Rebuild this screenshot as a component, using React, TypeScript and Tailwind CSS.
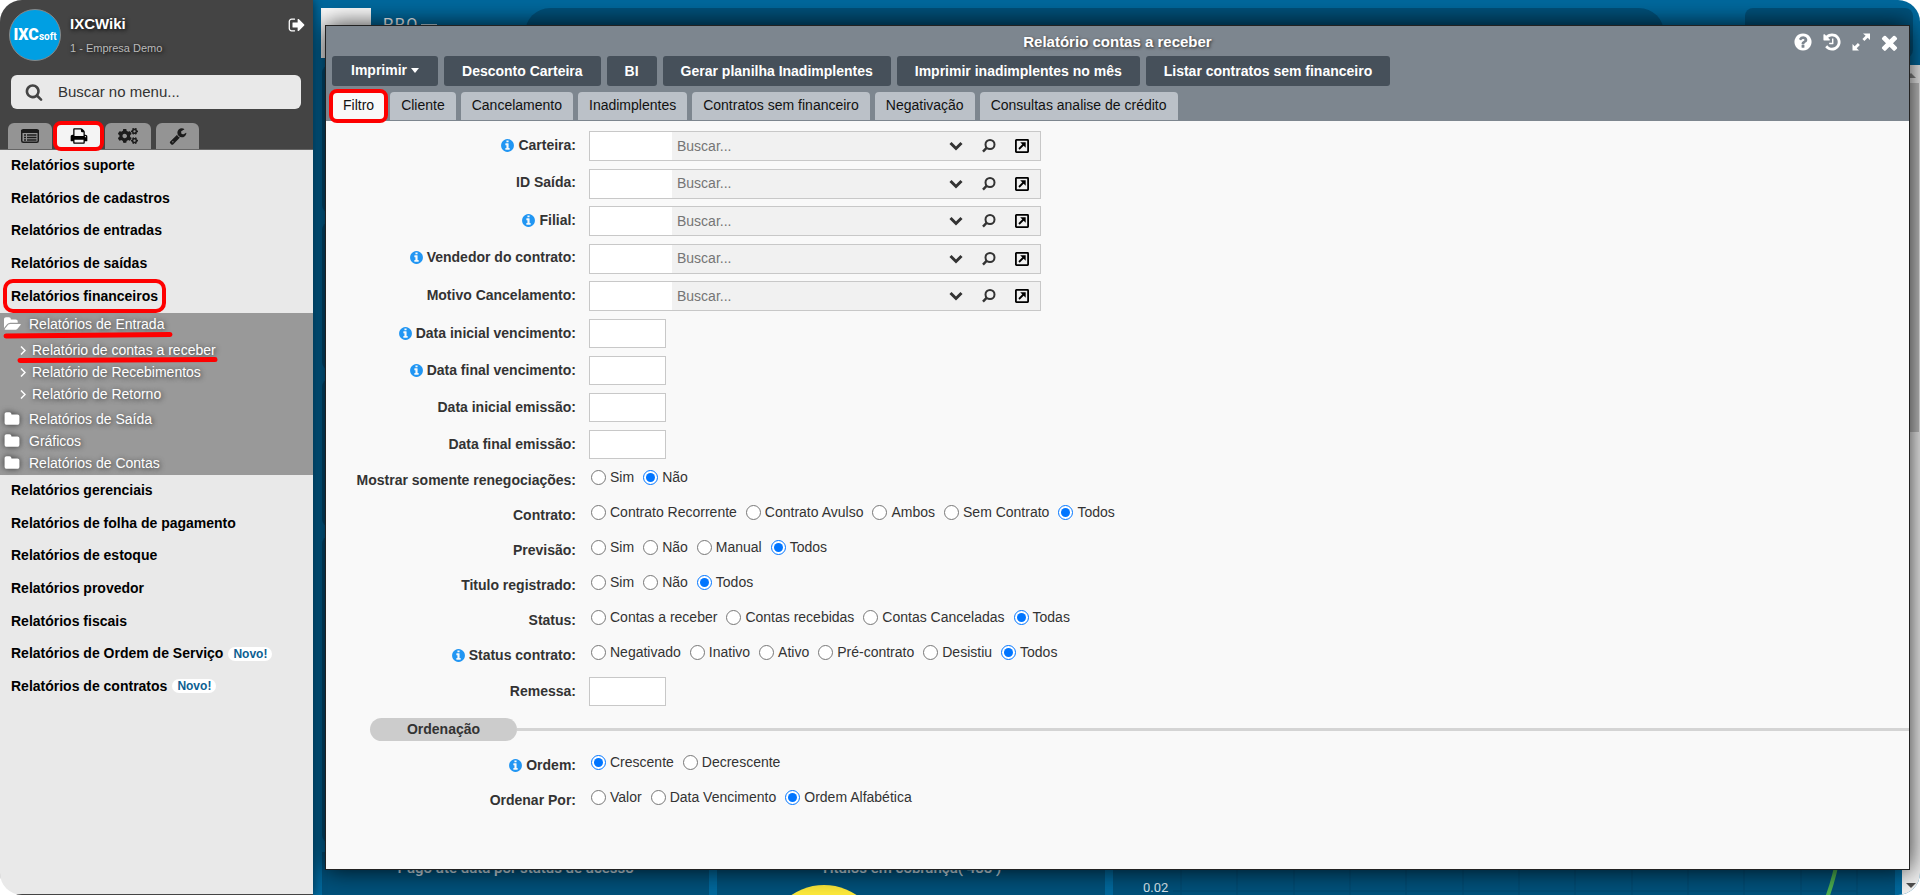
import { useState } from "react";
import { FaCogs } from "react-icons/fa";

// Font Awesome 4 glyphs, 1792 grid
const GLYPHS = {
  signOut:
    "M704 1440q0 4 1 20t.5 26.5-3 23.5-10 19.5-20.5 6.5h-320q-119 0-203.5-84.5t-84.5-203.5v-704q0-119 84.5-203.5t203.5-84.5h320q13 0 22.5 9.5t9.5 22.5q0 4 1 20t.5 26.5-3 23.5-10 19.5-20.5 6.5h-320q-66 0-113 47t-47 113v704q0 66 47 113t113 47h312l11.5 1 11.5 3 8 5.5 7 9 2 13.5zm928-544q0 26-19 45l-544 544q-19 19-45 19t-45-19-19-45v-288h-448q-26 0-45-19t-19-45v-384q0-26 19-45t45-19h448v-288q0-26 19-45t45-19 45 19l544 544q19 19 19 45z",
  print:
    "M448 1536h896v-256h-896v256zm0-640h896v-384h-160q-40 0-68-28t-28-68v-160h-640v640zm1152 64q0-26-19-45t-45-19-45 19-19 45 19 45 45 19 45-19 19-45zm128 0v416q0 13-9.5 22.5t-22.5 9.5h-224v160q0 40-28 68t-68 28h-960q-40 0-68-28t-28-68v-160h-224q-13 0-22.5-9.5t-9.5-22.5v-416q0-79 56.5-135.5t135.5-56.5h64v-544q0-40 28-68t68-28h672q40 0 88 20t76 48l152 152q28 28 48 76t20 88v256h64q79 0 135.5 56.5t56.5 135.5z",
  wrench:
    "M448 1472q0-26-19-45t-45-19-45 19-19 45 19 45 45 19 45-19 19-45zm644-420l-682 682q-37 37-90 37-52 0-91-37l-106-108q-38-36-38-90 0-53 38-91l681-681q39 98 114.5 173.5t173.5 114.5zm634-435q0 39-23 106-47 134-164.5 217.5t-258.5 83.5q-185 0-316.5-131.5t-131.5-316.5 131.5-316.5 316.5-131.5q58 0 121.5 16.5t107.5 46.5q16 11 16 28t-16 28l-293 169v224l193 107q5-3 79-48.5t135.5-81 70.5-35.5q15 0 23.5 10t8.5 25z",
  search:
    "M1216 832q0-185-131.5-316.5t-316.5-131.5-316.5 131.5-131.5 316.5 131.5 316.5 316.5 131.5 316.5-131.5 131.5-316.5zm512 832q0 52-38 90t-90 38q-54 0-90-38l-343-342q-179 124-399 124-143 0-273.5-55.5t-225-150-150-225-55.5-273.5 55.5-273.5 150-225 225-150 273.5-55.5 273.5 55.5 225 150 150 225 55.5 273.5q0 220-124 399l343 343q37 37 37 90z",
  folder:
    "M1728 608v704q0 92-66 158t-158 66h-1216q-92 0-158-66t-66-158v-960q0-92 66-158t158-66h320q92 0 158 66t66 158v32h672q92 0 158 66t66 158z",
  folderOpen:
    "M1879 952q0 31-31 66l-336 396q-43 51-120.5 86.5t-143.5 35.5h-1088q-34 0-60.5-13t-26.5-43q0-31 31-66l336-396q43-51 120.5-86.5t143.5-35.5h1088q34 0 60.5 13t26.5 43zm-343-344v160h-832q-94 0-197 47.5t-164 119.5l-337 396-5 6q0-4-.5-12.5t-.5-12.5v-960q0-92 66-158t158-66h320q92 0 158 66t66 158v32h544q92 0 158 66t66 158z",
  close:
    "M1490 1322q0 40-28 68l-136 136q-28 28-68 28t-68-28l-294-294-294 294q-28 28-68 28t-68-28l-136-136q-28-28-28-68t28-68l294-294-294-294q-28-28-28-68t28-68l136-136q28-28 68-28t68 28l294 294 294-294q28-28 68-28t68 28l136 136q28 28 28 68t-28 68l-294 294 294 294q28 28 28 68z",
  history:
    "M1664 896q0 156-61 298t-164 245-245 164-298 61q-172 0-327-72.5t-264-204.5q-7-10-6.5-22.5t8.5-20.5l137-138q10-9 25-9 16 2 23 12 73 95 179 147t225 52q104 0 198.5-40.5t163.5-109.5 109.5-163.5 40.5-198.5-40.5-198.5-109.5-163.5-163.5-109.5-198.5-40.5q-98 0-188 35.5t-160 101.5l137 138q31 30 14 69-17 40-59 40h-448q-26 0-45-19t-19-45v-448q0-42 40-59 39-17 69 14l130 129q107-101 244.5-156.5t284.5-55.5q156 0 298 61t245 164 164 245 61 298zm-640-288v448q0 14-9 23t-23 9h-320q-14 0-23-9t-9-23v-64q0-14 9-23t23-9h224v-352q0-14 9-23t23-9h64q14 0 23 9t9 23z",
  question:
    "M1024 1376v-192q0-14-9-23t-23-9h-192q-14 0-23 9t-9 23v192q0 14 9 23t23 9h192q14 0 23-9t9-23zm256-672q0-88-55.5-163t-138.5-116-170-41q-243 0-371 213-15 24 8 42l132 100q7 6 19 6 16 0 25-12 53-68 86-92 34-24 86-24 48 0 85.5 26t37.5 59q0 38-20 61t-68 45q-63 28-115.5 86.5t-52.5 125.5v36q0 14 9 23t23 9h192q14 0 23-9t9-23q0-19 21.5-49.5t54.5-49.5q32-18 49-28.5t46-35 44.5-48 28-60.5 12.5-81zm384 192q0 209-103 385.5t-279.5 279.5-385.5 103-385.5-103-279.5-279.5-103-385.5 103-385.5 279.5-279.5 385.5-103 385.5 103 279.5 279.5 103 385.5z",
  info:
    "M1152 1376v-160q0-14-9-23t-23-9h-96v-512q0-14-9-23t-23-9h-320q-14 0-23 9t-9 23v160q0 14 9 23t23 9h96v320h-96q-14 0-23 9t-9 23v160q0 14 9 23t23 9h448q14 0 23-9t9-23zm-128-896v-160q0-14-9-23t-23-9h-192q-14 0-23 9t-9 23v160q0 14 9 23t23 9h192q14 0 23-9t9-23zm640 416q0 209-103 385.5t-279.5 279.5-385.5 103-385.5-103-279.5-279.5-103-385.5 103-385.5 279.5-279.5 385.5-103 385.5 103 279.5 279.5 103 385.5z",
};

function Glyph({ name, size, className = "" }: { name: keyof typeof GLYPHS; size: number; className?: string }) {
  return (
    <svg width={size} height={size} viewBox="0 0 1792 1792" fill="currentColor" className={`shrink-0 overflow-visible ${className}`} aria-hidden="true">
      <path d={GLYPHS[name]} />
    </svg>
  );
}

function ListIcon() {
  return (
    <svg width="18" height="14" viewBox="0 0 18 14" aria-hidden="true">
      <rect x="0.75" y="0.75" width="16.5" height="12.5" rx="1.5" fill="none" stroke="currentColor" strokeWidth="1.5" />
      <path d="M0 1h18v3H0z" fill="currentColor" />
      <path d="M3 6h2M3 8.500h2M3 11h2M6 6h9.500M6 8.500h9.500M6 11h9.500" stroke="currentColor" strokeWidth="1.300" />
    </svg>
  );
}

const menuTop = ["Relatórios suporte", "Relatórios de cadastros", "Relatórios de entradas", "Relatórios de saídas", "Relatórios financeiros"];

const menuBottom = [
  { label: "Relatórios gerenciais" },
  { label: "Relatórios de folha de pagamento" },
  { label: "Relatórios de estoque" },
  { label: "Relatórios provedor" },
  { label: "Relatórios fiscais" },
  { label: "Relatórios de Ordem de Serviço", isNew: true },
  { label: "Relatórios de contratos", isNew: true },
];

const reports = ["Relatório de contas a receber", "Relatório de Recebimentos", "Relatório de Retorno"];
const folders = ["Relatórios de Saída", "Gráficos", "Relatórios de Contas"];

const actions = ["Desconto Carteira", "BI", "Gerar planilha Inadimplentes", "Imprimir inadimplentes no mês", "Listar contratos sem financeiro"];
const tabs = ["Filtro", "Cliente", "Cancelamento", "Inadimplentes", "Contratos sem financeiro", "Negativação", "Consultas analise de crédito"];

const searchFields = [
  { id: "carteira", label: "Carteira:", info: true },
  { id: "id_saida", label: "ID Saída:" },
  { id: "filial", label: "Filial:", info: true },
  { id: "vendedor", label: "Vendedor do contrato:", info: true },
  { id: "motivo", label: "Motivo Cancelamento:" },
];

const dateFields = [
  { id: "venc_ini", label: "Data inicial vencimento:", info: true },
  { id: "venc_fim", label: "Data final vencimento:", info: true },
  { id: "emis_ini", label: "Data inicial emissão:" },
  { id: "emis_fim", label: "Data final emissão:" },
];

type RadioField = { id: string; label: string; info?: boolean; options: string[]; value: string };

const radioFields: RadioField[] = [
  { id: "renegociacoes", label: "Mostrar somente renegociações:", options: ["Sim", "Não"], value: "Não" },
  { id: "contrato", label: "Contrato:", options: ["Contrato Recorrente", "Contrato Avulso", "Ambos", "Sem Contrato", "Todos"], value: "Todos" },
  { id: "previsao", label: "Previsão:", options: ["Sim", "Não", "Manual", "Todos"], value: "Todos" },
  { id: "titulo", label: "Titulo registrado:", options: ["Sim", "Não", "Todos"], value: "Todos" },
  { id: "status", label: "Status:", options: ["Contas a receber", "Contas recebidas", "Contas Canceladas", "Todas"], value: "Todas" },
  { id: "status_contrato", label: "Status contrato:", info: true, options: ["Negativado", "Inativo", "Ativo", "Pré-contrato", "Desistiu", "Todos"], value: "Todos" },
];

const orderFields: RadioField[] = [
  { id: "ordem", label: "Ordem:", info: true, options: ["Crescente", "Decrescente"], value: "Crescente" },
  { id: "ordenar_por", label: "Ordenar Por:", options: ["Valor", "Data Vencimento", "Ordem Alfabética"], value: "Ordem Alfabética" },
];

function Info() {
  return <Glyph name="info" size={15} className="mr-[3px] text-[#2196f3]" />;
}

const labelClass = "flex h-[28px] w-[250px] shrink-0 items-center justify-end font-bold";

function SearchField({ id, label, info }: { id: string; label: string; info?: boolean }) {
  return (
    <div className="flex items-start gap-[13px]">
      <label htmlFor={id} className={labelClass}>
        {info && <Info />}
        {label}
      </label>
      <div className="flex h-[30px] w-[452px] border border-[#c8c8c8] bg-[#f1f1f1] text-[#333]">
        <input id={id} className="w-[82px] bg-white px-1 outline-none" />
        <input aria-label={label} placeholder="Buscar..." className="min-w-0 flex-1 px-[5px] outline-none placeholder:text-[#757575]" />
        <button type="button" aria-label="Abrir lista" className="flex w-[33px] items-center justify-center">
          <svg width="14" height="10" viewBox="0 0 14 10" fill="none" stroke="currentColor" strokeWidth="3">
            <path d="M1.500 2l5.500 5.500L12.500 2" />
          </svg>
        </button>
        <button type="button" aria-label="Pesquisar" className="flex w-[33px] items-center justify-center">
          <svg width="14" height="14" viewBox="0 0 14 14" fill="none" stroke="currentColor" strokeWidth="2">
            <circle cx="8" cy="5.500" r="4.500" />
            <path d="M4.800 8.700L1 12.600" strokeWidth="2.400" />
          </svg>
        </button>
        <button type="button" aria-label="Abrir cadastro" className="mr-[2px] flex w-[33px] items-center justify-center text-black">
          <svg width="14" height="14" viewBox="0 0 14 14" fill="none" stroke="currentColor" strokeWidth="1.800">
            <rect x="0.900" y="0.900" width="12.200" height="12.200" rx="0.500" />
            <path d="M4 10l4.500-4.500" />
            <path d="M5.200 3.300h5.500v5.500z" fill="currentColor" stroke="none" />
          </svg>
        </button>
      </div>
    </div>
  );
}

function TextField({ id, label, info }: { id: string; label: string; info?: boolean }) {
  return (
    <div className="flex items-start gap-[13px]">
      <label htmlFor={id} className={labelClass}>
        {info && <Info />}
        {label}
      </label>
      <input id={id} className="h-[29px] w-[77px] border border-[#c8c8c8] bg-white px-1 outline-none" />
    </div>
  );
}

function RadioRow({ id, label, info, options, value }: RadioField) {
  const [selected, setSelected] = useState(value);
  return (
    <div role="radiogroup" aria-labelledby={`${id}_label`} className="flex h-[35px] gap-[15px]">
      <span id={`${id}_label`} className="flex w-[250px] shrink-0 items-center justify-end pt-[6px] font-bold">
        {info && <Info />}
        {label}
      </span>
      <div className="flex items-center gap-[9px]">
        {options.map((opt) => (
          <label key={opt} className="flex items-center gap-1">
            <input type="radio" name={id} value={opt} checked={selected === opt} onChange={() => setSelected(opt)} className="h-[15px] w-[15px]" />
            {opt}
          </label>
        ))}
      </div>
    </div>
  );
}

function Sidebar() {
  return (
    <aside className="relative z-20 flex w-[313px] shrink-0 flex-col border-b border-[#444] bg-[#e9e9e9] shadow-[0_0_10px_rgba(0,0,0,0.6)]">
      <div className="h-[150px] border-b border-[#666] bg-[#444]">
        <div className="flex pt-[9px] pl-[9px]">
          <div className="flex h-[52px] w-[52px] shrink-0 items-center justify-center rounded-full border border-[#888] bg-[#009fe3]">
            <div className="flex items-baseline font-[Roboto,sans-serif] text-white">
              <span className="text-base font-black">IXC</span>
              <span className="text-[10px] font-bold">soft</span>
            </div>
          </div>
          <div className="ml-[9px] flex-1 text-shadow-[1px_1px_4px_#000]">
            <div className="pt-[5px] text-[15px] leading-5 font-bold text-white">IXCWiki</div>
            <div className="pt-1 text-[11px] leading-5 text-[#bbb]">1 - Empresa Demo</div>
          </div>
          <a href="#sair" aria-label="Sair" className="mt-[7px] mr-[7px] h-[18px] text-white">
            <Glyph name="signOut" size={18} />
          </a>
        </div>
        <label className="mx-[11px] mt-[14px] flex h-[34px] w-[290px] items-center rounded-md bg-[#e9e9e9] pl-[14px] text-[#444]">
          <Glyph name="search" size={18} />
          <input aria-label="Buscar no menu" placeholder="Buscar no menu..." className="ml-[15px] w-[220px] text-[15px] outline-none placeholder:text-[#333]" />
        </label>
        <nav className="mt-[14px] flex h-[26px] gap-[5px] pl-2 text-[#1c1c1c]">
          <button aria-label="Menu" className="flex w-[44px] items-center justify-center rounded-t-md bg-[#949494]">
            <ListIcon />
          </button>
          <button aria-label="Relatórios" className="relative flex w-[43px] items-center justify-center bg-[#f4f4f4] text-black">
            <Glyph name="print" size={18} />
            <span className="absolute -inset-x-1 -top-[2px] -bottom-[2px] rounded-lg border-4 border-[#fe0000]" />
          </button>
          <button aria-label="Configurações" className="flex w-[46px] items-center justify-center rounded-t-md bg-[#949494]">
            <FaCogs size={20} />
          </button>
          <button aria-label="Ferramentas" className="flex w-[43px] items-center justify-center rounded-t-md bg-[#949494]">
            <Glyph name="wrench" size={18} />
          </button>
        </nav>
      </div>

      <ul className="grid h-[163px] grid-rows-5 pl-[11px] font-bold text-black">
        {menuTop.map((item) => (
          <li key={item} className="flex items-center">
            <a href="#menu" className="relative pb-px">
              {item}
              {item === "Relatórios financeiros" && <span className="absolute -inset-x-2 -top-[7px] -bottom-[5px] rounded-[10px] border-4 border-[#fe0000]" />}
            </a>
          </li>
        ))}
      </ul>

      <div className="h-[162px] bg-[#999] leading-[22px] text-white text-shadow-[1px_1px_5px_#333]">
        <a href="#entrada" className="relative flex h-[22px] items-center gap-[9px] pl-1">
          <Glyph name="folderOpen" size={16} />
          Relatórios de Entrada
          <svg className="absolute top-[19px] left-[3px]" width="170" height="7" viewBox="0 0 170 7">
            <path d="M3 4L167 2.500" stroke="#fe0000" strokeWidth="5" strokeLinecap="round" />
          </svg>
        </a>
        <ul className="pt-1 pb-[3px] pl-5">
          {reports.map((r, i) => (
            <li key={r}>
              <a href="#relatorio" className="relative flex items-center gap-[6px]">
                <svg width="6" height="9" viewBox="0 0 6 9" fill="none" stroke="currentColor" strokeWidth="1.500">
                  <path d="M1 0.500l4 4-4 4" />
                </svg>
                {r}
                {i === 0 && (
                  <svg className="absolute top-[17px] -left-[3px]" width="202" height="8" viewBox="0 0 202 8">
                    <path d="M3 4.500L198 3.500" stroke="#fe0000" strokeWidth="5" strokeLinecap="round" />
                  </svg>
                )}
              </a>
            </li>
          ))}
        </ul>
        {folders.map((f) => (
          <a key={f} href="#pasta" className="flex h-[22px] items-center gap-[9px] pl-1">
            <Glyph name="folder" size={16} className="drop-shadow-[0_0_3px_#333]" />
            {f}
          </a>
        ))}
      </div>

      <ul className="grid h-[228px] grid-rows-7 pl-[11px] font-bold text-black">
        {menuBottom.map((item) => (
          <li key={item.label} className="flex items-center">
            <a href="#menu" className="flex items-center gap-[5px] pb-px">
              {item.label}
              {item.isNew && <span className="rounded-full bg-white px-[5px] text-xs leading-[14px] text-[#0f5f92]">Novo!</span>}
            </a>
          </li>
        ))}
      </ul>
    </aside>
  );
}

function Dashboard() {
  return (
    <div className="flex min-w-0 flex-1 flex-col bg-[#00699e] font-[Roboto,sans-serif]">
      <div className="flex h-[65px] shrink-0 items-start pt-2 pr-[7px] pl-2">
        <div className="h-[50px] w-[50px] bg-white" />
        <div className="flex w-[154px] gap-[2px] pt-[5px] pl-3 text-base tracking-widest text-white">
          PRO
          <span className="mt-[11px] h-[2px] w-4 bg-white/80" />
        </div>
        <div className="h-[50px] flex-1 rounded-[28px] bg-[#00517b]" />
        <div className="ml-[81px] h-[50px] w-[168px] rounded-lg bg-[#00517b]" />
      </div>
      <div className="flex min-h-0 flex-1">
        <div className="flex min-w-0 flex-1 flex-col gap-[9px] pr-[7px] pl-[9px]">
          <div className="h-[148px] rounded-lg bg-[#00517b]" />
          <div className="h-[148px] rounded-lg bg-[#00517b]" />
          <div className="h-[148px] rounded-lg bg-[#00517b]" />
          <div className="flex-1 rounded-lg bg-[#00517b]" />
          <div className="grid h-[43px] grid-cols-4 gap-2 text-center text-[15px] leading-8 font-medium text-white/80">
            <div className="overflow-hidden bg-[#00517b]">Pago até data por status de acesso</div>
            <div className="relative overflow-hidden bg-[#00517b]">
              Títulos em cobrança( 488 )
              <svg className="absolute top-8 left-12" width="118" height="118" viewBox="0 0 118 118">
                <circle cx="59" cy="59" r="58" fill="#ffeb3b" />
              </svg>
            </div>
            <div className="col-span-2 overflow-hidden bg-[#00517b]">
              <svg width="100%" height="43">
                <path
                  d="M68 0v43M124 0v43M181 0v43M237 0v43M293 0v43M350 0v43M406 0v43M462 0v43M519 0v43M575 0v43M631 0v43M688 0v43M744 0v43M60 39h684"
                  stroke="#00486e"
                  fill="none"
                />
                <path d="M726 0Q722 24 714 46" stroke="#4caf50" strokeWidth="4" fill="none" />
                <text x="30" y="40" fontSize="13" fontWeight="400" fill="#d9e6ee">0.02</text>
              </svg>
            </div>
          </div>
        </div>
        {/* scrollbar */}
        <div className="flex w-[18px] flex-col items-center justify-between bg-[#f1f1f1] pt-2 pb-[7px]">
          <div className="flex flex-1 flex-col items-center">
            <span className="border-x-[5px] border-b-[5px] border-x-transparent border-b-[#888]" />
            <span className="mt-[5px] h-[349px] w-[15px] bg-[#c1c1c1]" />
          </div>
          <span className="border-x-[5px] border-t-[5px] border-x-transparent border-t-[#505050]" />
        </div>
      </div>
    </div>
  );
}

function ReportWindow() {
  const [tab, setTab] = useState("Filtro");
  return (
    <section className="absolute top-[25px] right-[10px] bottom-[25px] left-[325px] z-10 flex flex-col border border-[#222] bg-[#f9f9f9] text-[#333] shadow-[0_0_24px_rgba(0,0,0,0.85)]">
      <header className="bg-[#7d868f]">
        <div className="relative flex h-[30px] items-center justify-center">
          <h1 className="pt-[3px] text-[15px] font-bold text-white text-shadow-[1px_1px_3px_#333]">Relatório contas a receber</h1>
          <div className="absolute top-0 right-[10px] flex h-[32px] items-center gap-[10px] text-white">
            <button aria-label="Ajuda" className="flex w-[19px] justify-center"><Glyph name="question" size={20} /></button>
            <button aria-label="Histórico" className="flex w-[19px] justify-center"><Glyph name="history" size={20} /></button>
            <button aria-label="Expandir" className="flex w-[19px] justify-center">
              <svg width="18" height="18" viewBox="0 0 18 18" fill="currentColor">
                <path d="M11 0.500h7v6.500l-2.300-2.200-3.300 3.300-2-2 3.200-3.300zM7 17.500H0.500V11l2.200 2.200 3.200-3.200 2 2-3.200 3.200z" />
              </svg>
            </button>
            <button aria-label="Fechar" className="flex w-[19px] justify-center"><Glyph name="close" size={23} /></button>
          </div>
        </div>
        <div className="flex gap-[6px] pl-[6px] font-bold text-white">
          <button className="flex h-[30px] items-center gap-1 rounded-[3px] bg-[#46505a] px-[19px] pb-[2px]">
            Imprimir
            <span className="border-x-4 border-t-[5px] border-x-transparent border-t-white" />
          </button>
          {actions.map((a) => (
            <button key={a} className="h-[30px] rounded-[3px] bg-[#46505a] px-[18px]">{a}</button>
          ))}
        </div>
        <div role="tablist" className="mt-[6px] flex gap-[5px] pb-px pl-[6px] text-[#111]">
          {tabs.map((t) => (
            <button
              key={t}
              role="tab"
              aria-selected={tab === t}
              onClick={() => setTab(t)}
              className={`relative h-[28px] rounded-t px-[11px] pb-px ${tab === t ? "bg-[#f9f9f9]" : "bg-[#bbc1c8]"}`}
            >
              {t}
              {t === "Filtro" && <span className="absolute -inset-[3px] rounded-lg border-4 border-[#fe0000]" />}
            </button>
          ))}
        </div>
      </header>

      <form className="flex-1 overflow-hidden pt-[10px]">
        <div className="grid h-[188px] grid-rows-5">
          {searchFields.map((f) => <SearchField key={f.id} {...f} />)}
        </div>
        <div className="flex flex-col gap-2">
          {dateFields.map((f) => <TextField key={f.id} {...f} />)}
        </div>
        <div className="mt-px">
          {radioFields.map((f) => <RadioRow key={f.id} {...f} />)}
        </div>
        <div className="mt-[7px]">
          <TextField id="remessa" label="Remessa:" />
        </div>
        <div className="mt-3 flex items-center pl-11">
          <h2 className="h-[23px] w-[147px] rounded-full bg-[#ccc] text-center leading-[22px] font-bold">Ordenação</h2>
          <div className="h-[3px] flex-1 bg-[#d4d4d4]" />
        </div>
        <div className="mt-1">
          {orderFields.map((f) => <RadioRow key={f.id} {...f} />)}
        </div>
      </form>
    </section>
  );
}

export default function App() {
  return (
    <div className="bg-white font-['Liberation_Sans',Arial,sans-serif] text-[14px]">
      <div className="relative flex h-screen overflow-hidden rounded-[22px]">
        <Sidebar />
        <Dashboard />
        <ReportWindow />
      </div>
    </div>
  );
}
